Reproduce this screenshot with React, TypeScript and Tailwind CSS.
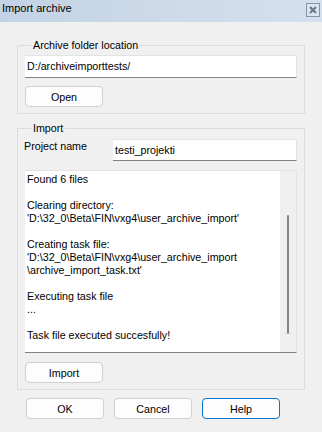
const FONT = "font-['Liberation_Sans',Arial,sans-serif]";

const LOG_LINES = [
  "Found 6 files",
  "",
  "Clearing directory:",
  "'D:\\32_0\\Beta\\FIN\\vxg4\\user_archive_import'",
  "",
  "Creating task file:",
  "'D:\\32_0\\Beta\\FIN\\vxg4\\user_archive_import",
  "\\archive_import_task.txt'",
  "",
  "Executing task file",
  "...",
  "",
  "Task file executed succesfully!",
];

function Button({ label, focused = false }: { label: string; focused?: boolean }) {
  return (
    <div
      className={`flex h-[21px] w-[78px] items-center justify-center rounded-[4px] border bg-[#fdfdfd] text-black ${
        focused ? "border-[#0078d4]" : "border-[#d0d0d0]"
      }`}
    >
      {label}
    </div>
  );
}

function TextBox({ value, className = "" }: { value: string; className?: string }) {
  return (
    <div
      className={`border-t border-r border-[#e3e3e3] border-b border-b-[#838383] bg-white pl-[2px] text-black ${className}`}
    >
      {value}
    </div>
  );
}

export default function App() {
  return (
    <div className={`${FONT} h-[432px] w-[322px] overflow-hidden bg-[#f0f0f0] text-[10.7px] leading-[14px]`}>
      {/* title bar */}
      <div className="flex h-[22px] items-start justify-between bg-gradient-to-r from-[#c3d3e5] to-[#d4e0ed] pl-[2px] pr-[2px]">
        <span className="pt-[1px] text-[11px] text-black">Import archive</span>
        <div className="mt-[3px] flex h-[14px] w-[14px] items-center justify-center border border-[#8695a6] bg-[#dbe5ef]">
          <svg width="8" height="8" viewBox="0 0 8 8">
            <path d="M1 1L7 7M7 1L1 7" stroke="#65778a" strokeWidth="2" />
          </svg>
        </div>
      </div>

      <div className="px-[17px] pt-[16px]">
        <fieldset className="border border-[#dcdcdc] pb-[6px] pl-[7px] pr-[7px]">
          <legend className="ml-[6px] px-[2px] text-black">Archive folder location</legend>
          <TextBox value="D:/archiveimporttests/" className="mt-[3px] h-[23px] pt-[3px]" />
          <div className="mt-[8px]">
            <Button label="Open" />
          </div>
        </fieldset>

        <fieldset className="mt-[7px] border border-[#dcdcdc] pb-[6px] pl-[7px] pr-[7px]">
          <legend className="ml-[6px] px-[2px] text-black">Import</legend>
          <div className="mt-[4px] flex items-start">
            <span className="ml-[-1px] w-[89px] text-black">Project name</span>
            <TextBox value="testi_projekti" className="h-[22px] flex-1 pt-[3px]" />
          </div>
          <div className="mt-[9px] flex h-[183px] border-t border-r border-[#e3e3e3] border-b border-b-[#838383] bg-white">
            <div className="flex-1 pl-[2px] pt-[2px] leading-[13px] text-black">
              {LOG_LINES.map((line, i) => (
                <div key={i} className="h-[13px] whitespace-pre">
                  {line}
                </div>
              ))}
            </div>
            <div className="flex w-[16px] justify-center bg-[#efefef] pt-[44px]">
              <div className="h-[119px] w-[2px] rounded-full bg-[#858585]" />
            </div>
          </div>
          <div className="mt-[9px]">
            <Button label="Import" />
          </div>
        </fieldset>

        <div className="ml-[9px] mt-[8px] flex gap-[10px]">
          <Button label="OK" />
          <Button label="Cancel" />
          <Button label="Help" focused />
        </div>
      </div>
    </div>
  );
}
